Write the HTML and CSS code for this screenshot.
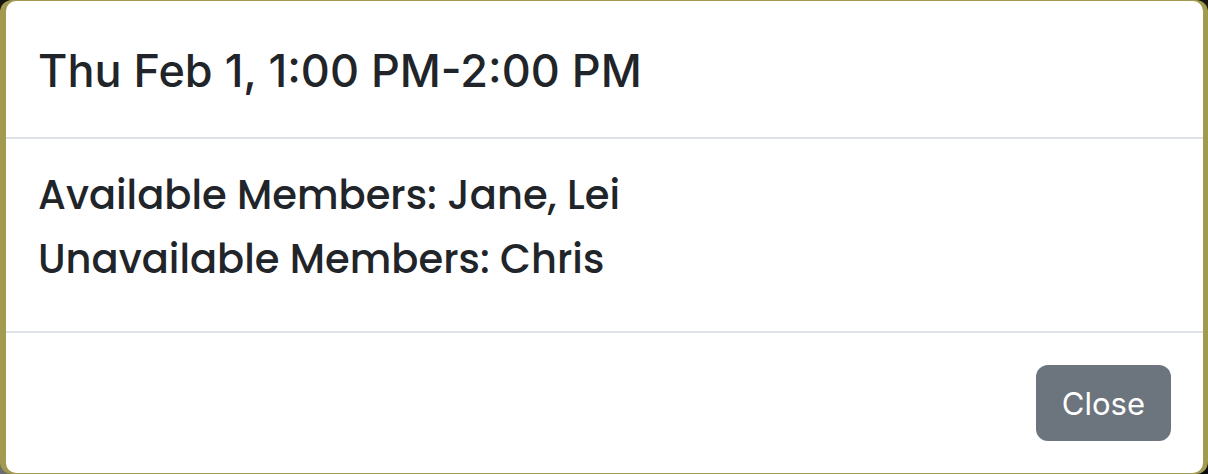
FILE: index.html
```html
<!DOCTYPE html>
<html lang="en">
<head>
<meta charset="utf-8">
<title>Meeting time</title>
<link rel="stylesheet" href="styles.css">
</head>
<body>
<div class="frame">
  <div class="modal" role="dialog" aria-labelledby="modal-title">
    <header class="modal-header">
      <h1 class="modal-title" id="modal-title">Thu Feb 1, 1:00 PM-2:00 PM</h1>
    </header>
    <div class="modal-body">
      <p class="members">Available Members: Jane, Lei</p>
      <p class="members">Unavailable Members: Chris</p>
    </div>
    <footer class="modal-footer">
      <button class="button" type="button">Close</button>
    </footer>
  </div>
</div>
</body>
</html>
```
FILE: styles.css
```css
* {
  box-sizing: border-box;
}

html {
  background: linear-gradient(90deg, #6e6e6e 50%, #0b0b10 50%) bottom / 100% 16px no-repeat #16160f;
}

body {
  margin: 0;
  color: #212529;
  font-family: Inter, sans-serif;
}

.frame {
  padding: 1px 5px 1px 6px;
  border-radius: 12px;
  background: #a29b4f;
}

.modal {
  border-radius: 10px;
  background: #fff;
}

.modal-header {
  padding: 40px 32px 36px;
  border-bottom: 2px solid #dee2e6;
}

.modal-title {
  margin: 0;
  font-size: 45px;
  font-weight: 500;
  line-height: 60px;
}

.modal-body {
  display: grid;
  padding: 24px 32px 40px;
}

.members {
  margin: 0;
  font-family: Poppins, Inter, sans-serif;
  font-size: 40px;
  font-weight: 500;
  line-height: 64px;
}

.modal-footer {
  display: flex;
  justify-content: flex-end;
  padding: 32px;
  border-top: 2px solid #dee2e6;
}

.button {
  padding: 15px 26px 13px;
  border: 0;
  border-radius: 12px;
  background: #6c757d;
  color: #fff;
  font-family: Inter, sans-serif;
  font-size: 31px;
  line-height: 48px;
}
```
